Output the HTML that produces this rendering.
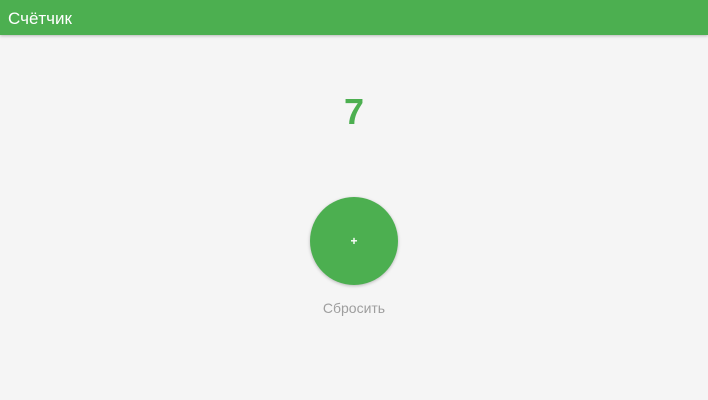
<!DOCTYPE html>
<html><head><meta charset="utf-8"><style>
body{margin:0;width:708px;height:400px;background:#f5f5f5;font-family:"Liberation Sans",sans-serif;position:relative;overflow:hidden}
.h{position:absolute;left:0;top:0;width:708px;height:35px;background:#4caf50;box-shadow:0 1px 3px rgba(0,0,0,.25);color:#fff;font-size:17px;line-height:37px;padding-left:8px;box-sizing:border-box}
.n{position:absolute;left:0;width:708px;top:92px;text-align:center;color:#4caf50;font-weight:bold;font-size:36px;line-height:40px}
.c{position:absolute;left:310px;top:197px;width:88px;height:88px;border-radius:50%;background:#4caf50;box-shadow:0 1px 3px rgba(0,0,0,.25);color:#fff;font-size:12px;text-align:center;line-height:88px;font-weight:bold}
.r{position:absolute;left:0;width:708px;top:299px;text-align:center;color:#9e9e9e;font-size:14px;line-height:18px}
</style></head><body>
<div class="h">Счётчик</div>
<div class="n">7</div>
<div class="c">+</div>
<div class="r">Сбросить</div>
</body></html>
